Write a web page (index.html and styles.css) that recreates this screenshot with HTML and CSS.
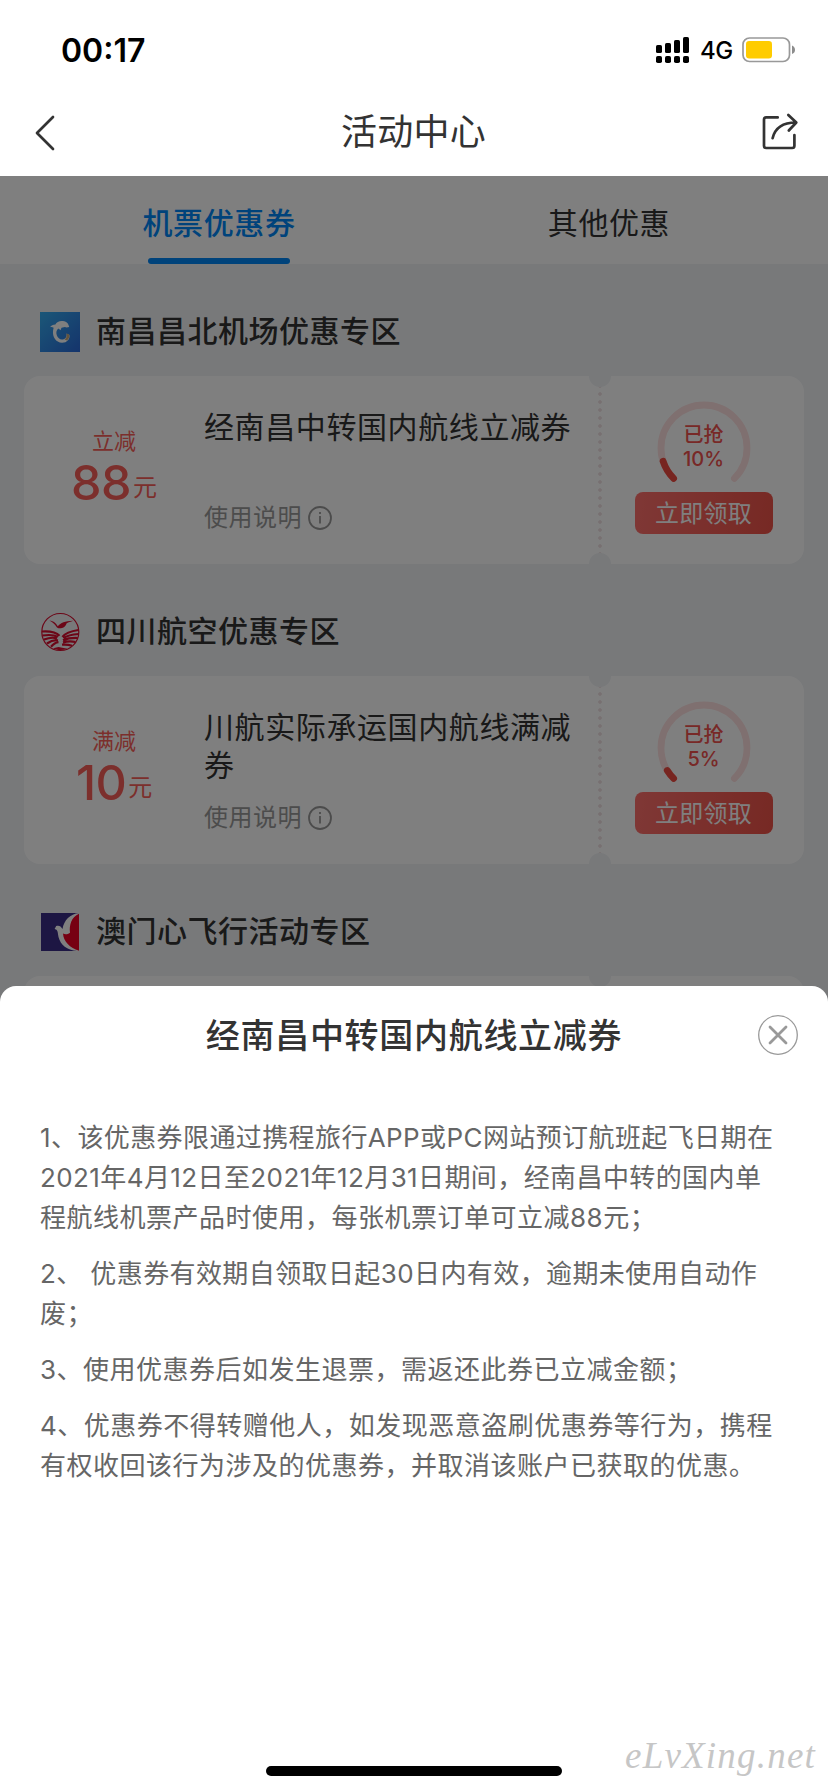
FILE: index.html
```html
<!DOCTYPE html>
<html lang="zh-CN">
<head>
<meta charset="utf-8">
<meta name="viewport" content="width=828">
<title>活动中心</title>
<link rel="stylesheet" href="styles.css">
</head>
<body>
<div class="phone">
  <header class="top">
    <div class="status">
      <span class="clock">00:17</span>
      <div class="status-right">
        <svg class="signal" viewBox="0 0 34 28" width="34" height="28">
          <rect x="0" y="9" width="6" height="8" rx="1.6"/><rect x="9" y="7" width="6" height="10" rx="1.6"/><rect x="18" y="4" width="6" height="13" rx="1.6"/><rect x="27" y="1" width="6" height="16" rx="1.6"/>
          <rect x="0" y="20" width="6" height="7" rx="1.8"/><rect x="9" y="20" width="6" height="7" rx="1.8"/><rect x="18" y="20" width="6" height="7" rx="1.8"/><rect x="27" y="20" width="6" height="7" rx="1.8"/>
        </svg>
        <span class="net">4G</span>
        <svg class="battery" viewBox="0 0 54 26" width="54" height="26">
          <rect x="1" y="1" width="46.5" height="23.5" rx="6.5" fill="none" stroke="#999" stroke-width="1.7"/>
          <rect x="4" y="4" width="26" height="17.4" rx="3.2" fill="#fc0"/>
          <path d="M50 8.500c2 .7 3 2.300 3 4.300s-1 3.600-3 4.300z" fill="#8c8c8c"/>
        </svg>
      </div>
    </div>
    <nav class="navbar">
      <svg class="nav-icon" viewBox="0 0 40 40" width="40" height="40"><path d="M29 4 13 20l16 16"/></svg>
      <h1>活动中心</h1>
      <svg class="nav-icon" viewBox="0 0 40 40" width="40" height="40"><path d="M18.700 4.400H7.200Q5 4.400 5 6.600v26.200Q5 35 7.200 35h26q2.200 0 2.200-2.200V22M13.600 25.200C16 15 24 9.500 37 9.500M29.300 2l8 7.500-7.500 8"/></svg>
    </nav>
  </header>

  <main class="content">
    <div class="tabs">
      <div class="tab active"><span>机票优惠券</span></div>
      <div class="tab"><span>其他优惠</span></div>
    </div>

    <section class="zone">
      <h2>
        <svg viewBox="0 0 40 40" width="40" height="40">
          <defs><linearGradient id="sea" x1="0" y1="0" x2="1" y2="1"><stop offset="0" stop-color="#36aef0"/><stop offset="1" stop-color="#2968d8"/></linearGradient></defs>
          <rect width="40" height="40" fill="url(#sea)"/>
          <path d="M10 15.200c1.300-2 3-2.500 5.400-2.700 1.200-2.500 4.200-3.900 7.600-3.400 3.200.5 5 2 5.700 4.400l.5 1.400-2.600.6-1.700-.4-3.400.6-1 2.500-2-1.600c-2.200 1.600-2.600 4.200-1.700 6.700 1 3 3.400 4.500 6 4.100 2.800-.5 4.300-2.900 3.700-6l2.900 1.600c.8 3.900-2.300 7.800-7.300 7.800-6.500-.3-9.900-6-9-12.500.2-1 .4-1.700.5-2.600-1-.6-2.200-.9-3.600-.5z" fill="#fff"/>
          <path d="M24.500 27.500c2-1.200 2.800-3.200 2-6l2.900 1.300c.2 2.400-.7 4.400-2.300 5.600z" fill="#c9a878"/>
        </svg>
        <span>南昌昌北机场优惠专区</span>
      </h2>
      <article class="coupon">
        <div class="worth"><span class="kind">立减</span><p class="price"><b>88</b><i>元</i></p></div>
        <div class="info"><h3>经南昌中转国内航线立减券</h3>
          <p class="usage">使用说明<svg viewBox="0 0 24 24" width="24" height="24"><circle cx="12" cy="12" r="11"/><path d="M12 10v7.500M12 6v2"/></svg></p></div>
        <div class="tear"></div>
        <div class="claim">
          <div class="gauge">
            <svg viewBox="0 0 94 82" width="94" height="82"><path class="track" d="M16.600 77.400A43 43 0 1 1 77.400 77.400"/><path class="done" d="M16.600 77.400A43 43 0 0 1 6.100 60.300"/></svg>
            <p>已抢<br>10%</p>
          </div>
          <button>立即领取</button>
        </div>
      </article>
    </section>

    <section class="zone">
      <h2>
        <svg viewBox="0 0 40 40" width="40" height="40" fill="none" stroke="#d80d2e">
          <circle cx="20.300" cy="20" r="18.500" stroke-width="1.200"/>
          <path d="M9.300 8.500c3.500.2 6.300 2.200 8.500 5.700 3-3.500 7-4.900 15.400-5.400-2.700.9-4.700 1.500-6.500 2.400-.8 2.600-2.700 4.200-4.700 4.800-1.700.6-3.400.5-5-.6C14.500 12 12.500 10 9.300 8.500z" fill="#d80d2e" stroke="none"/>
          <path d="M2 19.500c8-.5 14 .5 17.500 4.300M2.300 23.500c7-1 12-.8 15.500 1.500M4 27.500c5-1.800 9-2.500 13-1M7 31.500c3.500-2.500 7-3.700 11-3.200M11 34.800c2.500-3 5-4.500 7.500-4.700M38.400 18c-7 1-13 3-16 7M38.800 22c-6 .3-11.500 1.200-15.300 4.300M37.800 26c-5-.2-10 .2-14.800 2.300M35.500 30c-4-.8-8.500-.7-12.500.4M32 33.700c-3-1-6-1.400-10-1" stroke-width="2.200"/>
          <path d="M13 36.300c4 2.300 9.500 2.400 14.500.4l-9-1.700z" fill="#d80d2e" stroke="none"/>
        </svg>
        <span>四川航空优惠专区</span>
      </h2>
      <article class="coupon">
        <div class="worth"><span class="kind">满减</span><p class="price"><b>10</b><i>元</i></p></div>
        <div class="info"><h3>川航实际承运国内航线满减券</h3>
          <p class="usage">使用说明<svg viewBox="0 0 24 24" width="24" height="24"><circle cx="12" cy="12" r="11"/><path d="M12 10v7.500M12 6v2"/></svg></p></div>
        <div class="tear"></div>
        <div class="claim">
          <div class="gauge">
            <svg viewBox="0 0 94 82" width="94" height="82"><path class="track" d="M16.600 77.400A43 43 0 1 1 77.400 77.400"/><path class="done" d="M16.600 77.400A43 43 0 0 1 10.300 69.500"/></svg>
            <p>已抢<br>5%</p>
          </div>
          <button>立即领取</button>
        </div>
      </article>
    </section>

    <section class="zone">
      <h2>
        <svg viewBox="0 0 40 40" width="40" height="40">
          <rect x="1" y="1" width="38" height="38" fill="#3a2c86"/>
          <path d="M39 1v38h-2C27 38 20.500 33 18.500 25c-.8-3.500-.5-6-2-7.300l-1.900-.8 1.600-2.800c2.300-1 4.800-.2 6.300 3C24 8 30 2 39 1z" fill="#fff"/>
          <path d="M39 1.800v37C30 36 23.500 29.500 23 21.500c2 1.200 4.200 1.200 7-.7C29 13 31.500 5 39 1.800z" fill="#ee0024"/>
        </svg>
        <span>澳门心飞行活动专区</span>
      </h2>
      <article class="coupon"><div class="worth"></div><div class="info"></div><div class="tear"></div><div class="claim"></div></article>
    </section>
  </main>

  <div class="mask"></div>

  <section class="sheet">
    <div class="sheet-head">
      <h2>经南昌中转国内航线立减券</h2>
      <svg class="close" viewBox="0 0 40 40" width="40" height="40"><circle cx="20" cy="20" r="19.300"/><path d="m12 12 16 16M28 12 12 28"/></svg>
    </div>
    <div class="rules">
      <p><span class="tight">1、该优惠券限通过携程旅行APP或PC网站预订航班起飞日期在</span><br><span class="tight">2021年4月12日至2021年12月31日期间，经南昌中转的国内单</span><br>程航线机票产品时使用，每张机票订单可立减88元；</p>
      <p><span class="tight">2、 优惠券有效期自领取日起30日内有效，逾期未使用自动作</span><br>废；</p>
      <p>3、使用优惠券后如发生退票，需返还此券已立减金额；</p>
      <p>4、优惠券不得转赠他人，如发现恶意盗刷优惠券等行为，携程<br>有权收回该行为涉及的优惠券，并取消该账户已获取的优惠。</p>
    </div>
    <div class="home-bar"></div>
    <span class="watermark">eLvXing.net</span>
  </section>
</div>
</body>
</html>
```
FILE: styles.css
```css
* { box-sizing: border-box; margin: 0; padding: 0; }
body { width: 828px; font-family: Inter, "Noto Sans CJK SC", sans-serif; color: #333; }
h1, h2, h3, b, i { font-weight: 400; font-style: normal; }
svg { display: block; flex: none; }

.phone { position: relative; width: 828px; height: 1792px; overflow: hidden; background: #f0f2f5; }

/* status bar and title */
.top { height: 176px; background: #fff; }
.status { height: 90px; padding: 10px 32px 0 61px; display: flex; align-items: center; justify-content: space-between; color: #000; }
.clock { font-size: 32px; font-weight: 600; }
.status-right { display: flex; align-items: center; }
.net { font-size: 24px; font-weight: 500; margin: 0 10px 0 10px; width: 32px; white-space: nowrap; letter-spacing: -.5px; }
.navbar { height: 86px; padding: 0 29px 0 24px; display: flex; align-items: center; justify-content: space-between; }
.navbar h1 { font-size: 36px; line-height: 50px; letter-spacing: .3px; padding: 0 0 2px 4px; }
.nav-icon { fill: none; stroke: #333; stroke-width: 2.700; stroke-linecap: round; stroke-linejoin: round; }

/* tabs */
.tabs { height: 88px; background: #fff; display: flex; padding: 0 24px; }
.tab { width: 390px; display: flex; flex-direction: column; align-items: center; justify-content: space-between; font-size: 30px; letter-spacing: .6px; padding-top: 25px; }
.tab span { line-height: 44px; }
.tab.active { color: #0086f6; font-weight: 500; }
.tab.active::after { content: ""; width: 142px; height: 6px; border-radius: 3px; background: #0086f6; }

/* coupon zones */
.zone { padding: 48px 24px 0; height: 300px; }
.zone h2 { height: 40px; margin: 0 0 24px 16px; display: flex; align-items: center; gap: 16px; font-size: 30px; font-weight: 500; letter-spacing: .5px; line-height: 40px; white-space: nowrap; }
.zone h2 span { padding-bottom: 3px; }
.coupon { height: 188px; border-radius: 16px; background: #fff; display: flex; overflow: hidden; }
.worth { width: 180px; padding-top: 48px; text-align: center; color: #f85f59; }
.kind { display: block; font-size: 22px; line-height: 34px; }
.price { display: flex; justify-content: center; align-items: baseline; gap: 2px; line-height: 50px; }
.price b { font-size: 48.500px; font-weight: 500; letter-spacing: -.6px; }
.price i { font-size: 24px; line-height: 30px; padding-bottom: 3px; transform: translateY(-4px); }
.info { width: 385px; display: flex; flex-direction: column; justify-content: space-between; padding: 32px 0 28px; }
.info h3 { font-size: 30px; line-height: 38px; letter-spacing: .6px; margin-right: -6px; }
.usage { display: flex; align-items: center; gap: 6px; font-size: 24px; line-height: 36px; letter-spacing: .5px; color: #999; }
.usage svg { fill: none; stroke: #999; stroke-width: 1.800; }
.tear { width: 22px; background:
  radial-gradient(circle at 50% 0, #f0f2f5 10.500px, transparent 11.500px) no-repeat,
  radial-gradient(circle at 50% 100%, #f0f2f5 10.500px, transparent 11.500px) no-repeat,
  radial-gradient(circle, #eee0e2 1.400px, transparent 2.200px) 50% 14px / 8px 8px repeat-y; }
.claim { flex: 1; display: flex; flex-direction: column; align-items: center; padding: 25px 8px 0 0; }
.gauge { position: relative; width: 94px; height: 82px; }
.gauge path { fill: none; stroke-width: 6.800; stroke-linecap: round; }
.gauge .track { stroke: #ffe0e0; }
.gauge .done { stroke: #ee4b40; }
.gauge p { position: absolute; left: 0; right: 0; top: 22px; text-align: center; font-size: 20px; font-weight: 500; line-height: 24px; color: #f0524e; }
.claim button { margin-top: 9px; width: 138px; height: 42px; border: 0; border-radius: 8px; background: linear-gradient(100deg, #ff706c, #ee5248); color: #fff; font: 24px/38px "Noto Sans CJK SC", sans-serif; letter-spacing: .3px; padding-bottom: 3px; }

/* dimmed layer and bottom sheet */
.mask { position: absolute; inset: 176px 0 0; background: rgba(0, 0, 0, .5); }
.sheet { position: absolute; left: 0; right: 0; bottom: 0; height: 806px; background: #fff; border-radius: 16px 16px 0 0; padding: 29px 0 0; }
.sheet-head { display: grid; grid-template-columns: 88px 1fr 88px; grid-template-rows: 40px; }
.sheet-head h2 { grid-column: 2; text-align: center; font-size: 34px; font-weight: 500; letter-spacing: .7px; line-height: 42px; }
.close { margin-left: 18px; fill: none; stroke: #999; stroke-width: 1.300; stroke-linecap: round; }
.close path { stroke-width: 2.800; }
.rules { margin: 62px 40px 0; padding-top: 1px; font-size: 26px; line-height: 40px; letter-spacing: .5px; color: #666; display: grid; gap: 16px; white-space: nowrap; }
.tight { letter-spacing: .4px; }
.home-bar { position: absolute; left: 266px; bottom: 16px; width: 296px; height: 10px; border-radius: 5px; background: #000; }
.watermark { position: absolute; right: 12px; bottom: 14px; font: italic 37px/44px "Liberation Serif", serif; letter-spacing: 1.200px; color: #c6c6c6; }
```
